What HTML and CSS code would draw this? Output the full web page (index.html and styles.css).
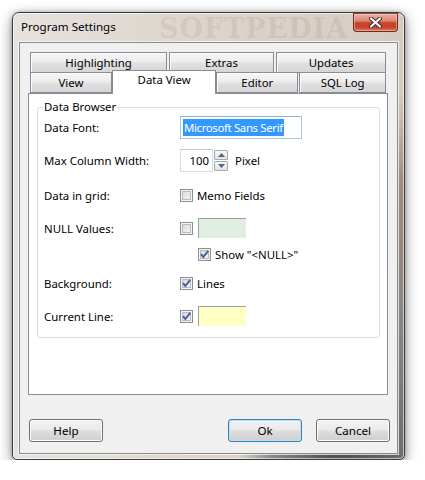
FILE: index.html
```html
<!DOCTYPE html>
<html>
<head>
<meta charset="utf-8">
<title>Program Settings</title>
<link rel="stylesheet" href="styles.css">
</head>
<body>
<div class="window">
  <div class="titlebar">
    <span class="title">Program Settings</span>
    <span class="wm-title">SOFTPEDIA</span>
    <div class="close">
      <svg width="13" height="11" viewBox="0 0 13 11">
        <path d="M2 1.5 L11 9.5 M11 1.5 L2 9.5" stroke="#3a2a28" stroke-width="4" stroke-linecap="round"/>
        <path d="M2 1.5 L11 9.5 M11 1.5 L2 9.5" stroke="#ffffff" stroke-width="2.2" stroke-linecap="round"/>
      </svg>
    </div>
  </div>
  <div class="client">
    <div class="tabs">
      <div class="tabrow">
        <div class="tab w-hl">Highlighting</div>
        <div class="tab w-ex">Extras</div>
        <div class="tab w-up">Updates</div>
      </div>
      <div class="tabrow front">
        <div class="tab w-view">View</div>
        <div class="tab sel">Data View</div>
        <div class="tab w-ed">Editor</div>
        <div class="tab w-sql">SQL Log</div>
      </div>
    </div>
    <div class="panel">
      <fieldset class="group">
        <legend>Data Browser</legend>
        <div class="form">
          <div class="lbl">Data Font:</div>
          <div class="ctl">
            <div class="textbox"><span class="seltext">Microsoft Sans Serif</span></div>
          </div>

          <div class="lbl">Max Column Width:</div>
          <div class="ctl">
            <div class="spinbox">100</div>
            <div class="spinner">
              <div class="spinbtn"><svg width="7" height="4" viewBox="0 0 7 4"><path d="M0 4 L3.5 0 L7 4 Z" fill="#56657f"/></svg></div>
              <div class="spinbtn"><svg width="7" height="4" viewBox="0 0 7 4"><path d="M0 0 L3.5 4 L7 0 Z" fill="#56657f"/></svg></div>
            </div>
            <span class="unit">Pixel</span>
          </div>

          <div class="lbl">Data in grid:</div>
          <div class="ctl">
            <span class="cb"></span>
            <span class="cbtext">Memo Fields</span>
          </div>

          <div class="lbl">NULL Values:</div>
          <div class="ctl">
            <span class="cb"></span>
            <span class="swatch green"></span>
          </div>

          <div class="lbl"></div>
          <div class="ctl indent">
            <span class="cb checked"><svg width="11" height="11" viewBox="0 0 11 11"><path d="M2 5.2 L4.3 8 L9.2 1.8" fill="none" stroke="#4b5f96" stroke-width="2"/></svg></span>
            <span class="cbtext">Show "&lt;NULL&gt;"</span>
          </div>

          <div class="lbl">Background:</div>
          <div class="ctl">
            <span class="cb checked"><svg width="11" height="11" viewBox="0 0 11 11"><path d="M2 5.2 L4.3 8 L9.2 1.8" fill="none" stroke="#4b5f96" stroke-width="2"/></svg></span>
            <span class="cbtext">Lines</span>
          </div>

          <div class="lbl">Current Line:</div>
          <div class="ctl">
            <span class="cb checked"><svg width="11" height="11" viewBox="0 0 11 11"><path d="M2 5.2 L4.3 8 L9.2 1.8" fill="none" stroke="#4b5f96" stroke-width="2"/></svg></span>
            <span class="swatch yellow"></span>
          </div>
        </div>
      </fieldset>
    </div>
    <div class="buttons">
      <button class="btn">Help</button>
      <button class="btn default">Ok</button>
      <button class="btn">Cancel</button>
    </div>
  </div>
</div>
</body>
</html>
```

FILE: styles.css
```css
* { box-sizing: border-box; }

html, body {
  margin: 0;
  padding: 0;
  background: #ffffff;
}

body {
  font-family: "Noto Sans", "Open Sans", sans-serif;
  font-size: 11.4px;
  color: #000;
  padding: 12px 0 0 12px;
}

.window {
  width: 393px;
  height: 448px;
  border: 1px solid #3a3a3a;
  border-radius: 7px 7px 5px 5px;
  padding: 0 6px 5px 6px;
  display: flex;
  flex-direction: column;
  background:
    linear-gradient(to bottom, rgba(0,0,0,0) 18%, #a08c7e 38%, #8a8582 70%, #6e6e6e 100%) right top / 6px 100% no-repeat,
    linear-gradient(to right, rgba(0,0,0,0) 58%, #8a8a8a 66%, #4f4f4f 82%, #6a6a6a 100%) left bottom / 100% 5px no-repeat,
    linear-gradient(to right, #e7e2dd 0%, #ddd5cd 45%, #d5cbc1 100%);
  box-shadow: 0 4px 14px rgba(0,0,0,0.45), 0 0 4px rgba(0,0,0,0.25), inset 0 0 0 1px rgba(255,255,255,0.6);
}

.titlebar {
  position: relative;
  height: 29px;
  display: flex;
  justify-content: space-between;
  align-items: flex-start;
}

.title {
  margin: 6px 0 0 2px;
  line-height: 16px;
  font-size: 11.6px;
  color: #000;
  position: relative;
  z-index: 1;
}

.wm-title {
  position: absolute;
  left: 140px;
  top: 2px;
  font-family: "DejaVu Serif", serif;
  font-weight: bold;
  font-size: 27px;
  letter-spacing: 1px;
  color: rgba(130, 110, 90, 0.12);
  line-height: 28px;
}

.close {
  width: 45px;
  height: 19px;
  border: 1px solid #6a2a20;
  border-top-color: #8a4a40;
  border-radius: 0 0 4px 4px;
  background: linear-gradient(to bottom, #eab0a2 0%, #dd8673 40%, #c8432b 52%, #c6432c 78%, #dc7c5f 100%);
  box-shadow: inset 0 0 0 1px rgba(255,220,210,0.45);
  display: flex;
  align-items: center;
  justify-content: center;
  position: relative;
  z-index: 1;
}

.client {
  height: 412px;
  border: 1px solid #8a8a8a;
  background: #f0f0f0;
  box-shadow: 0 0 0 1px rgba(255,255,255,0.7);
  padding-top: 9px;
  display: flex;
  flex-direction: column;
}

.tabs {
  margin-left: 10px;
  width: 356px;
  display: flex;
  flex-direction: column;
}

.tabrow {
  display: flex;
  gap: 2px;
}

.tabrow.front {
  margin-top: -1px;
  gap: 0;
}

.tab {
  height: 21px;
  border: 1px solid #898c95;
  background: linear-gradient(to bottom, #f6f6f6 0%, #ededed 45%, #e0e0e0 55%, #d6d6d6 100%);
  box-shadow: inset 1px 1px 0 #fcfcfc;
  text-align: center;
  line-height: 19px;
  white-space: nowrap;
}

.w-hl { width: 137px; }
.w-ex { width: 105px; }
.w-up { width: 110px; }
.w-view { width: 82px; }
.w-ed { width: 82px; margin-right: 1px; }
.w-sql { width: 87px; }

.tab.sel {
  width: 105px;
  height: 24px;
  margin-top: -2px;
  background: #fff;
  box-shadow: none;
  border-bottom: none;
  line-height: 18px;
  padding-top: 0;
  position: relative;
  z-index: 2;
}

.panel {
  margin-top: -1px;
  margin-left: 8px;
  width: 360px;
  height: 302px;
  background: #fff;
  border: 1px solid #898c95;
  padding: 5px 7px 0 8px;
}

.group {
  margin: 0;
  border: 1px solid #d5dfe5;
  border-radius: 3px;
  padding: 0 6px 10px 6px;
  min-width: 0;
}

.group legend {
  padding: 0 1px;
  margin-left: -1px;
  line-height: 16px;
}

.form {
  margin-top: 1px;
  display: grid;
  grid-template-columns: 136px 1fr;
  grid-template-rows: 33px 35px 33px 26px 29px 33px 22px;
  align-items: start;
}

.lbl, .ctl {
  height: 22px;
  display: flex;
  align-items: center;
  white-space: nowrap;
}

.ctl.indent { padding-left: 18px; }

.textbox {
  width: 122px;
  height: 23px;
  border: 1px solid #a9c6e4;
  border-top-color: #8fb3da;
  padding: 2px 0 0 2px;
}

.seltext {
  display: inline-block;
  background: #3399ff;
  color: #fff;
  line-height: 17px;
  padding: 0 1px;
  letter-spacing: -0.35px;
}

.spinbox {
  width: 33px;
  height: 23px;
  border: 1px solid #d9dce3;
  border-top-color: #c4c8d0;
  text-align: right;
  padding-right: 3px;
  line-height: 21px;
}

.spinner {
  margin-left: 1px;
  width: 14px;
  height: 21px;
  display: flex;
  flex-direction: column;
  gap: 1px;
}

.spinbtn {
  flex: 1;
  border: 1px solid #a9a9a9;
  border-radius: 1px;
  background: linear-gradient(to bottom, #f7f7f7, #e3e3e3);
  display: flex;
  align-items: center;
  justify-content: center;
}

.unit { margin-left: 7px; }

.cb {
  width: 13px;
  height: 13px;
  flex: none;
  border: 1px solid #8e8f8f;
  background: linear-gradient(135deg, #d3d6da 0%, #f8f8f8 100%);
  box-shadow: inset 0 0 0 1px #f4f4f4, inset 0 0 0 2px #b7bbc1;
  display: flex;
  align-items: center;
  justify-content: center;
}

.cb svg { display: block; }

.cbtext { margin-left: 4px; }

.swatch {
  width: 48px;
  height: 20px;
  margin-left: 5px;
  border-top: 1px solid #a0a0a0;
  border-left: 1px solid #a0a0a0;
}

.swatch.green { background: #dfeede; }
.swatch.yellow { background: #ffffc4; }

.buttons {
  margin-top: 24px;
  padding: 0 7px 0 9px;
  display: flex;
}

.btn {
  width: 74px;
  height: 23px;
  font-family: inherit;
  font-size: 11.6px;
  color: #000;
  border: 1px solid #707070;
  border-radius: 3px;
  background: linear-gradient(to bottom, #f2f2f2 0%, #ebebeb 45%, #dddddd 55%, #cfcfcf 100%);
  box-shadow: inset 0 0 0 1px #fbfbfb;
  padding: 0;
  line-height: 20px;
}

.btn.default {
  margin-left: auto;
  margin-right: 14px;
  border-color: #3c7fb1;
  box-shadow: inset 0 0 0 1px #b5e3fb;
}
```
